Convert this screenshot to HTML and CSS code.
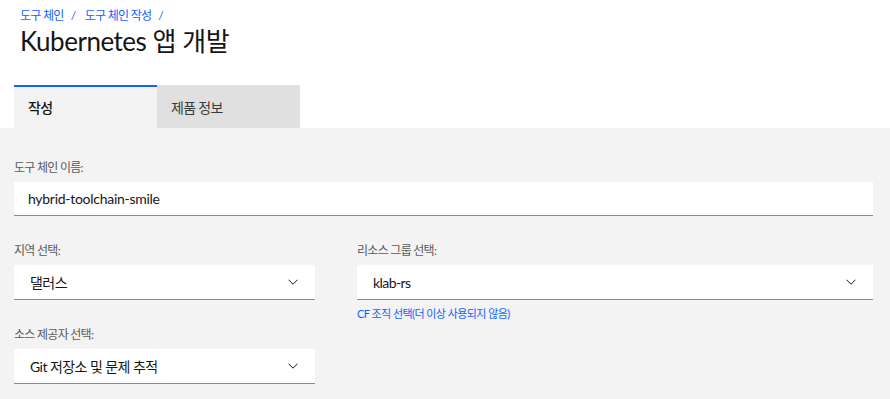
FILE: index.html
```html
<!DOCTYPE html>
<html lang="ko">
<head>
    <meta charset="UTF-8">
    <meta name="viewport" content="width=device-width, initial-scale=1.0">
    <title>Kubernetes 앱 개발</title>
    <link rel="stylesheet" href="styles.css">
</head>
<body>

    <header class="page-header">
        <nav class="breadcrumb">
            <a href="#">도구 체인</a><span class="sep">/</span>
            <a href="#">도구 체인 작성</a><span class="sep">/</span>
        </nav>
        <h1 class="title">Kubernetes 앱 개발</h1>
    </header>

    <div class="tabs">
        <div class="tab tab-active">작성</div>
        <div class="tab">제품 정보</div>
    </div>

    <main class="panel">
        <div class="field">
            <label class="label" for="name">도구 체인 이름:</label>
            <input class="text-input" type="text" id="name" value="hybrid-toolchain-smile">
        </div>

        <div class="row">
            <div class="field">
                <span class="label">지역 선택:</span>
                <div class="select">
                    <span>댈러스</span>
                    <svg class="chevron" width="10" height="6" viewBox="0 0 10 6"><path d="M0.5 0.7l4.5 4.5 4.5-4.5"/></svg>
                </div>
            </div>
            <div class="field">
                <span class="label">리소스 그룹 선택:</span>
                <div class="select">
                    <span>klab-rs</span>
                    <svg class="chevron" width="10" height="6" viewBox="0 0 10 6"><path d="M0.5 0.7l4.5 4.5 4.5-4.5"/></svg>
                </div>
                <a class="helper" href="#">CF 조직 선택(더 이상 사용되지 않음)</a>
            </div>
        </div>

        <div class="row row-last">
            <div class="field">
                <span class="label">소스 제공자 선택:</span>
                <div class="select">
                    <span>Git 저장소 및 문제 추적</span>
                    <svg class="chevron" width="10" height="6" viewBox="0 0 10 6"><path d="M0.5 0.7l4.5 4.5 4.5-4.5"/></svg>
                </div>
            </div>
        </div>
    </main>

</body>
</html>
```

FILE: styles.css
```css
body {
    margin: 0;
    background: #fff;
    color: #161616;
    font-family: Lato, "Noto Sans CJK KR", sans-serif;
    letter-spacing: -0.03em;
}
.page-header {
    padding: 8px 20px 0;
}
.breadcrumb {
    font-size: 12px;
    line-height: 16px;
    letter-spacing: -0.06em;
}
.breadcrumb a {
    color: #0f62fe;
    text-decoration: none;
}
.breadcrumb .sep {
    color: #0f62fe;
    margin: 0 7px;
}
.title {
    margin: 0;
    font-size: 26px;
    font-weight: 400;
    line-height: 34px;
}
.tabs {
    display: flex;
    margin: 27px 0 0 14px;
}
.tab {
    width: 143px;
    height: 43px;
    box-sizing: border-box;
    border-top: 2px solid transparent;
    background: #e0e0e0;
    color: #393939;
    font-size: 14px;
    line-height: 41px;
    padding-left: 14px;
    letter-spacing: -0.05em;
}
.tab-active {
    background: #f3f3f3;
    border-top-color: #0f62fe;
    color: #161616;
    font-weight: 500;
}
.panel {
    background: #f3f3f3;
    padding: 32px 17px 20px 14px;
}
.field {
    display: flex;
    flex-direction: column;
}
.label {
    font-size: 12px;
    line-height: 16px;
    color: #5a5a5a;
    margin-bottom: 6px;
    letter-spacing: -0.06em;
}
.text-input {
    height: 34px;
    box-sizing: border-box;
    border: none;
    border-bottom: 1px solid #8d8d8d;
    background: #fff;
    padding: 0 14px;
    font-family: inherit;
    font-size: 14px;
    letter-spacing: -0.02em;
    color: #161616;
    outline: none;
}
.row {
    display: grid;
    grid-template-columns: 301px 1fr;
    gap: 42px;
    margin-top: 27px;
}
.row-last {
    margin-top: 6px;
}
.select {
    height: 35px;
    box-sizing: border-box;
    background: #fff;
    border-bottom: 1px solid #8d8d8d;
    display: flex;
    align-items: center;
    justify-content: space-between;
    padding: 0 17px 0 16px;
    font-size: 14px;
    letter-spacing: -0.04em;
}
.chevron {
    fill: none;
    stroke: #161616;
    stroke-width: 1;
}
.helper {
    margin-top: 7px;
    font-size: 11px;
    line-height: 14px;
    color: #0f62fe;
    text-decoration: none;
    letter-spacing: -0.05em;
}
```
